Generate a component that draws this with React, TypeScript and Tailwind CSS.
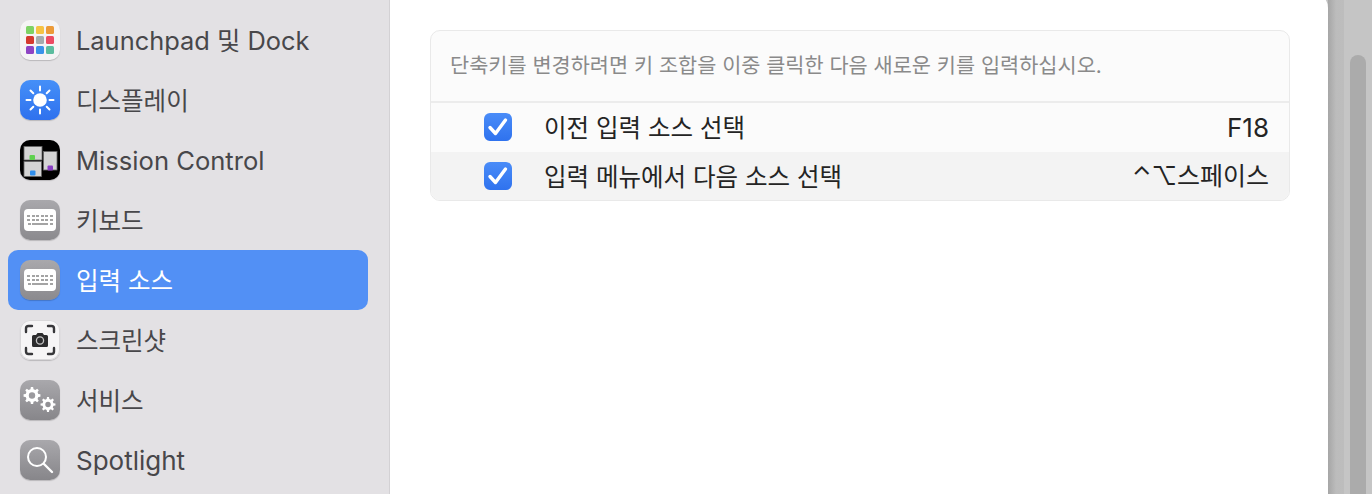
import type { ReactNode } from 'react'

const font = 'font-["Inter","Noto_Sans_CJK_KR",sans-serif]'

function Tile({ className, children }: { className: string; children: ReactNode }) {
  return (
    <div className={`w-10 h-10 rounded-[10px] flex items-center justify-center shrink-0 shadow-[0_1px_1px_rgba(0,0,0,0.18)] ${className}`}>
      {children}
    </div>
  )
}

function LaunchpadIcon() {
  const colors = ['#7ed265', '#f6c344', '#ec9a38', '#d5392f', '#a5abae', '#ec4b63', '#8e44c4', '#3a93ea', '#5cbd9f']
  return (
    <Tile className="bg-[#f5f4f5]">
      <div className="grid grid-cols-3 gap-[2.5px]">
        {colors.map((c) => (
          <div key={c} className="w-[7.5px] h-[7.5px] rounded-[1.5px]" style={{ backgroundColor: c }} />
        ))}
      </div>
    </Tile>
  )
}

function DisplayIcon() {
  return (
    <Tile className="bg-gradient-to-b from-[#458ff8] to-[#2f71ee]">
      <svg width="32" height="32" viewBox="0 0 32 32" fill="none" stroke="white" strokeWidth="2" strokeLinecap="round">
        <circle cx="16" cy="16" r="6.8" fill="white" stroke="none" />
        <path d="M16 2.5v4M16 25.5v4M2.5 16h4M25.5 16h4M6.5 6.500l2.800 2.800M22.700 22.700l2.800 2.800M6.500 25.500l2.800-2.800M22.700 9.300l2.800-2.800" />
      </svg>
    </Tile>
  )
}

function MissionIcon() {
  return (
    <Tile className="bg-black">
      <svg width="40" height="40" viewBox="0 0 40 40">
        <rect x="4" y="6.500" width="18" height="13.500" fill="#d4d4d4" stroke="#666" strokeWidth="0.8" />
        <rect x="4" y="21.500" width="17.500" height="15" fill="#d4d4d4" stroke="#666" strokeWidth="0.8" />
        <rect x="23.500" y="11.500" width="13.500" height="18.500" fill="#d4d4d4" stroke="#666" strokeWidth="0.8" />
        <rect x="9.500" y="15" width="5.500" height="5" rx="1" fill="#5fd14f" />
        <rect x="10" y="30.500" width="5.500" height="5" rx="1" fill="#2f8fee" />
        <rect x="27.500" y="25.500" width="5.500" height="5" rx="1" fill="#8a3fc4" />
      </svg>
    </Tile>
  )
}

function KeyboardIcon() {
  const keys = Array.from({ length: 12 })
  return (
    <Tile className="bg-gradient-to-b from-[#a9a8ac] to-[#8b8a8e]">
      <div className="w-8 h-[22px] rounded-[4px] bg-white flex flex-col items-center justify-center gap-[1.5px]">
        <div className="grid grid-cols-6 gap-x-[1.5px] gap-y-[1.5px]">
          {keys.map((_, i) => (
            <div key={i} className="w-[3px] h-[2.5px] bg-[#a4a4a4]" />
          ))}
        </div>
        <div className="flex gap-[1.5px]">
          <div className="w-[3px] h-[2.5px] bg-[#a4a4a4]" />
          <div className="w-[16px] h-[2.5px] bg-[#a4a4a4]" />
          <div className="w-[3px] h-[2.5px] bg-[#a4a4a4]" />
        </div>
      </div>
    </Tile>
  )
}

function ScreenshotIcon() {
  return (
    <Tile className="bg-[#f6f5f6] ring-1 ring-inset ring-[#d9d8da]">
      <svg width="40" height="40" viewBox="0 0 40 40" fill="none">
        <path d="M6 12V8.500Q6 6 8.500 6H12M28 6h3.500Q34 6 34 8.500V12M34 28v3.500Q34 34 31.500 34H28M12 34H8.500Q6 34 6 31.500V28" stroke="#37373a" strokeWidth="2.400" strokeLinecap="round" />
        <path d="M12 16.500Q12 15 13.500 15H16l1.500-2h5L24 15h2.500Q28 15 28 16.500V25.500q0 1.500-1.500 1.500h-13Q12 27 12 25.500Z" fill="#2c2c2e" />
        <circle cx="20" cy="20.500" r="3.600" fill="none" stroke="#c4c4c4" strokeWidth="1.300" />
      </svg>
    </Tile>
  )
}

// gear outline with square-ish teeth
function gearPath(cx: number, cy: number, outer: number, inner: number, teeth: number) {
  const step = (Math.PI * 2) / teeth
  const pts: string[] = []
  for (let i = 0; i < teeth; i++) {
    const a = i * step
    const corners: [number, number][] = [
      [a - step * 0.3, inner],
      [a - step * 0.17, outer],
      [a + step * 0.17, outer],
      [a + step * 0.3, inner],
    ]
    for (const [ang, r] of corners) {
      pts.push(`${(cx + Math.cos(ang) * r).toFixed(2)} ${(cy + Math.sin(ang) * r).toFixed(2)}`)
    }
  }
  return `M${pts.join('L')}Z`
}

function ServicesIcon() {
  return (
    <Tile className="bg-gradient-to-b from-[#a9a8ac] to-[#87868a]">
      <svg width="40" height="40" viewBox="0 0 40 40">
        <path d={gearPath(12, 15.5, 8.500, 6.500, 8)} fill="white" />
        <circle cx="12" cy="15.500" r="3.200" fill="#9b9a9e" />
        <path d={gearPath(28, 24.5, 7.500, 5.600, 8)} fill="white" />
        <circle cx="28" cy="24.500" r="2.700" fill="#929195" />
      </svg>
    </Tile>
  )
}

function SpotlightIcon() {
  return (
    <Tile className="bg-gradient-to-b from-[#a9a8ac] to-[#87868a]">
      <svg width="40" height="40" viewBox="0 0 40 40" fill="none" stroke="white" strokeLinecap="round">
        <circle cx="17" cy="17" r="9" strokeWidth="2" />
        <path d="M24 24l8 8" strokeWidth="2.400" />
      </svg>
    </Tile>
  )
}

const items = [
  { icon: LaunchpadIcon, label: 'Launchpad 및 Dock', size: 'text-[25.4px]' },
  { icon: DisplayIcon, label: '디스플레이', size: 'text-[24.5px]' },
  { icon: MissionIcon, label: 'Mission Control', size: 'text-[25.6px]' },
  { icon: KeyboardIcon, label: '키보드', size: 'text-[24.5px]' },
  { icon: KeyboardIcon, label: '입력 소스', size: 'text-[24.5px]', active: true },
  { icon: ScreenshotIcon, label: '스크린샷', size: 'text-[24.5px]' },
  { icon: ServicesIcon, label: '서비스', size: 'text-[24.5px]' },
  { icon: SpotlightIcon, label: 'Spotlight', size: 'text-[26px]' },
]

function Shortcut({ label, keys, keySize, shaded }: { label: string; keys: string; keySize: string; shaded?: boolean }) {
  return (
    <div className={`h-[48.5px] flex items-center pl-[53px] pr-[20px] ${shaded ? 'bg-[#f3f3f3]' : ''}`}>
      <div className="w-7 h-7 rounded-[6px] bg-gradient-to-b from-[#4a8cf8] to-[#2f72ee] flex items-center justify-center">
        <svg width="28" height="28" viewBox="0 0 28 28" fill="none" stroke="white" strokeWidth="3.400" strokeLinecap="round" strokeLinejoin="round">
          <path d="M6 14.500l5.500 6L21.500 7" />
        </svg>
      </div>
      <span className="ml-[32px] mt-[2px] text-[24.5px] leading-none text-[#242424]">{label}</span>
      <span className={`ml-auto mt-[2px] leading-none text-[#242424] ${keySize}`}>{keys}</span>
    </div>
  )
}

export default function App() {
  return (
    <div className={`w-[1372px] h-[494px] flex overflow-hidden bg-[#c3c3c3] ${font}`}>
      {/* sidebar */}
      <aside className="w-[390px] shrink-0 bg-[#e3e1e4] border-r border-[#d3d1d4] pt-[10px] px-2">
        {items.map(({ icon: Icon, label, size, active }) => (
          <div key={label} className={`h-[60px] pl-3 flex items-center gap-4 w-[360px] rounded-[10px] ${active ? 'bg-[#5290f5]' : ''}`}>
            <Icon />
            <span className={`mt-[2px] leading-none ${size} ${active ? 'text-white' : 'text-[#48474a]'}`}>{label}</span>
          </div>
        ))}
      </aside>

      {/* content, window top sits just above the visible area */}
      <main className="w-[938px] h-[502px] -mt-2 shrink-0 bg-white rounded-tr-[16px] pt-[38px] pl-[40px] pr-[38px]">
        <div className="rounded-[10px] border border-[#e9e9e9] bg-[#fbfbfb] overflow-hidden">
          <div className="h-[72px] flex items-center px-[19px] border-b-2 border-[#ececec] text-[20.8px] text-[#8a8a8a]">
            단축키를 변경하려면 키 조합을 이중 클릭한 다음 새로운 키를 입력하십시오.
          </div>
          <Shortcut label="이전 입력 소스 선택" keys="F18" keySize="text-[26px]" />
          <Shortcut label="입력 메뉴에서 다음 소스 선택" keys="⌃⌥스페이스" keySize="text-[25px]" shaded />
        </div>
      </main>

      {/* scrollbar strip */}
      <div className="flex-1 flex bg-[#c5c5c5]">
        <div className="w-[16px] bg-gradient-to-r from-[#a6a6a6] via-[#bcbcbc] to-[#bdbdbd]" />
        <div className="w-[6px]" />
        <div className="w-4 mt-[55px] rounded-t-full bg-[#ababab]" />
      </div>
    </div>
  )
}
